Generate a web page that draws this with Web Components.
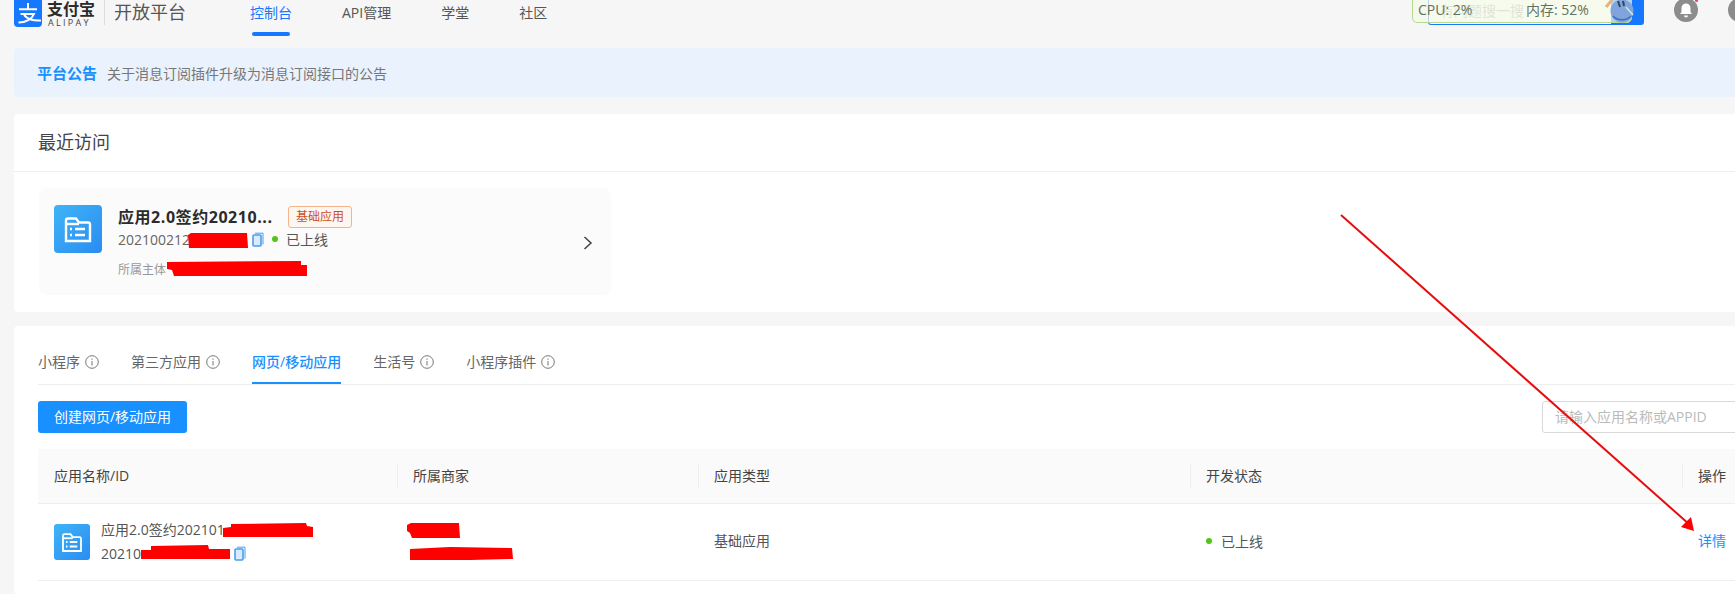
<!DOCTYPE html>
<html lang="zh">
<head>
<meta charset="utf-8">
<title>开放平台</title>
<style>
    html,body{
        margin:0;
        height:594px;
        overflow:hidden;
        background:#f6f6f6;
        color:#333;
        font-family:"Open Sans","Noto Sans CJK SC",sans-serif;
        font-size:14px;
    }
    #page{
        position:relative;
        width:1735px;
        height:594px;
        overflow:hidden;
    }
</style>
</head>
<body>
<div id="page">
    <ap-header></ap-header>
    <ap-notice label="平台公告">关于消息订阅插件升级为消息订阅接口的公告</ap-notice>
    <ap-recent></ap-recent>
    <ap-apps></ap-apps>
    <ap-monitor></ap-monitor>
    <ap-markup></ap-markup>
</div>

<script>
class PlainElement extends HTMLElement {
    constructor(){
        super();
        this.attachShadow({mode:'open'});
        this.shadowRoot.innerHTML=this.markup();
    }
    markup(){
        return '';
    }
}

class ApHeader extends PlainElement {
    markup(){
        return `
<style>
    :host{
        display:flex;
        height:48px;
        padding-left:14px;
        align-items:flex-start;
        white-space:nowrap;
    }
    .logo{
        flex:none;
        display:block;
        width:28px;
        height:27px;
    }
    .brand{
        width:50px;
        margin-left:5px;
        padding-top:1px;
        flex:none;
    }
    .brand b{
        display:block;
        font-size:16px;
        line-height:16px;
        color:#2b2b2b;
    }
    .brand span{
        display:block;
        margin-top:1px;
        padding-left:1px;
        font-size:9px;
        line-height:10px;
        letter-spacing:2.300px;
        color:#444;
    }
    .split{
        flex:none;
        width:1px;
        height:25px;
        margin:0 9px 0 7px;
        background:#ddd;
    }
    .title{
        flex:none;
        width:136px;
        font-size:18px;
        line-height:25px;
        color:#555;
    }
    nav{
        display:flex;
        gap:50px;
        color:#555;
    }
    .end{
        display:flex;
        margin-left:auto;
        align-items:flex-start;
    }
    .search{
        display:flex;
        flex:none;
        width:216px;
        height:25px;
        box-sizing:border-box;
        border:1px solid #1677ff;
        border-top:none;
        border-radius:0 0 3px 3px;
        background:#fff;
    }
    .search span{
        flex:1;
        padding-left:11px;
        line-height:22px;
        color:#a8a8a8;
        font-size:14px;
    }
    .search i{
        flex:none;
        width:32px;
        background:#1677ff;
    }
    .bell{
        flex:none;
        width:24px;
        height:24px;
        margin-left:30px;
        margin-top:-2px;
    }
    .avatar{
        flex:none;
        width:24px;
        height:24px;
        margin-left:30px;
        margin-right:-17px;
        margin-top:-2px;
        border-radius:50%;
        background:#8c8c8c;
    }
</style>
<svg class="logo" viewBox="0 0 28 27">
    <path d="M0 0H28V23a4 4 0 0 1-4 4H4a4 4 0 0 1-4-4Z" fill="#1677ff"/>
    <g fill="none" stroke="#fff" stroke-width="2">
        <path d="M5 9.200H23M14 3V9.200"/>
        <path d="M6.500 14H20C18 19 12 22.500 4.500 22.500"/>
        <path d="M10 15C13 18.500 18 21 27 20.500"/>
    </g>
</svg>
<div class="brand"><b>支付宝</b><span>ALIPAY</span></div>
<div class="split"></div>
<div class="title">开放平台</div>
<nav>
    <ap-nav-item active>控制台</ap-nav-item>
    <ap-nav-item>API管理</ap-nav-item>
    <ap-nav-item>学堂</ap-nav-item>
    <ap-nav-item>社区</ap-nav-item>
</nav>
<div class="end">
    <div class="search"><span>有问题搜一搜</span><i></i></div>
    <svg class="bell" viewBox="0 0 24 24">
        <circle cx="12" cy="12" r="12" fill="#8c8c8c"/>
        <path d="M12 5.500a4.500 4.500 0 0 0-4.500 4.500v4L6 16h12l-1.500-2v-4A4.500 4.500 0 0 0 12 5.500Z" fill="#fff"/>
        <path d="M10 17.500h4a2 2 0 0 1-4 0Z" fill="#fff"/>
        <circle cx="22.500" cy="2.500" r="1.500" fill="#e8446b"/>
    </svg>
    <div class="avatar"></div>
</div>`;
    }
}

class ApNavItem extends PlainElement {
    markup(){
        return `
<style>
    :host{
        display:block;
        height:36px;
        position:relative;
        line-height:26px;
    }
    :host([active]){
        color:#1677ff;
    }
    :host([active])::after{
        content:'';
        position:absolute;
        left:2px;
        right:2px;
        bottom:0;
        height:4px;
        border-radius:2px;
        background:#1677ff;
    }
</style>
<slot></slot>`;
    }
}

class ApNotice extends PlainElement {
    markup(){
        return `
<style>
    :host{
        display:flex;
        align-items:center;
        height:49px;
        margin-left:14px;
        padding-left:23px;
        border-radius:4px 0 0 4px;
        background:#e9f2fd;
        color:#777;
    }
    b{
        margin-right:10px;
        font-size:15px;
        color:#1890ff;
    }
</style>
<b>${this.getAttribute('label')}</b><slot></slot>`;
    }
}

class ApAppIcon extends PlainElement {
    markup(){
        return `
<style>
    :host{
        display:block;
        flex:none;
        width:var(--size,48px);
        height:var(--size,48px);
    }
    svg{
        display:block;
        width:100%;
        height:100%;
    }
</style>
<svg viewBox="0 0 48 48">
    <defs>
        <linearGradient id="g" x1="0" y1="0" x2="1" y2="1">
            <stop offset="0" stop-color="#3fb4f6"/>
            <stop offset="1" stop-color="#2a8cf2"/>
        </linearGradient>
    </defs>
    <rect width="48" height="48" rx="4" fill="url(#g)"/>
    <g fill="none" stroke="#fff" stroke-width="2.400">
        <path d="M12 15.500a2 2 0 0 1 2-2h8l3 4h9a2 2 0 0 1 2 2V36H12Z"/>
        <path d="M12 19H25"/>
        <path d="M21 24H31M21 30H31"/>
        <path d="M16 24H18M16 30H18"/>
    </g>
</svg>`;
    }
}

class ApCopyIcon extends PlainElement {
    markup(){
        return `
<style>
    :host{
        display:inline-block;
        flex:none;
        width:12px;
        height:15px;
    }
    svg{
        display:block;
    }
</style>
<svg width="12" height="15" viewBox="0 0 12 15" fill="none" stroke="#4a9df0">
    <path d="M3 1.200H11V12.500"/>
    <rect x="1" y="3" width="8" height="11" rx="1" stroke-width="1.600" fill="#d9ebfd"/>
</svg>`;
    }
}

class ApStatus extends PlainElement {
    markup(){
        return `
<style>
    :host{
        display:inline-flex;
        align-items:center;
        gap:9px;
        color:#555;
    }
    :host::before{
        content:'';
        width:6px;
        height:6px;
        border-radius:50%;
        background:#52c41a;
    }
</style>
<slot></slot>`;
    }
}

class ApInfoIcon extends PlainElement {
    markup(){
        return `
<style>
    :host{
        display:block;
        flex:none;
        width:14px;
        height:14px;
    }
    svg{
        display:block;
    }
</style>
<svg width="14" height="14" viewBox="0 0 14 14" fill="none" stroke="#777">
    <circle cx="7" cy="7" r="6.300"/>
    <path d="M7 6V10.500M7 3.500V4.800"/>
</svg>`;
    }
}

class ApRecent extends PlainElement {
    markup(){
        return `
<style>
    :host{
        display:block;
        height:198px;
        margin:17px 0 0 14px;
        border-radius:4px 0 0 4px;
        background:#fff;
    }
    h2{
        margin:0;
        height:58px;
        box-sizing:border-box;
        padding-left:24px;
        border-bottom:1px solid #eee;
        font-size:18px;
        font-weight:400;
        line-height:56px;
        color:#444;
    }
    .card{
        display:flex;
        width:572px;
        height:107px;
        box-sizing:border-box;
        margin:16px 0 0 25px;
        padding:17px 18px 0 15px;
        border-radius:8px;
        background:#fbfbfb;
    }
    .text{
        flex:1;
        margin-left:16px;
        margin-top:-1px;
    }
    .top{
        display:flex;
        align-items:center;
        height:24px;
    }
    .top b{
        width:170px;
        font-size:16px;
        letter-spacing:.55px;
        white-space:nowrap;
        color:#2b2b2b;
    }
    .badge{
        width:64px;
        height:22px;
        box-sizing:border-box;
        border:1px solid #f3b48c;
        border-radius:3px;
        background:#fff6f0;
        color:#c8501e;
        font-size:12px;
        line-height:20px;
        text-align:center;
        margin-top:2px;
    }
    .id{
        display:flex;
        align-items:center;
        height:24px;
        margin-top:-1px;
        color:#666;
    }
    .id span{
        width:134px;
    }
    ap-status{
        margin-left:8px;
        gap:8px;
    }
    .owner{
        margin-top:9px;
        font-size:12px;
        line-height:20px;
        color:#999;
    }
    svg{
        flex:none;
        margin-top:31px;
    }
</style>
<h2>最近访问</h2>
<div class="card">
    <ap-app-icon></ap-app-icon>
    <div class="text">
        <div class="top"><b>应用2.0签约20210...</b><div class="badge">基础应用</div></div>
        <div class="id"><span>202100212</span><ap-copy-icon></ap-copy-icon><ap-status>已上线</ap-status></div>
        <div class="owner">所属主体</div>
    </div>
    <svg width="10" height="14" viewBox="0 0 10 14" fill="none" stroke="#444" stroke-width="1.500"><path d="M1.500 1 8 7 1.500 13"/></svg>
</div>`;
    }
}

class ApTab extends PlainElement {
    markup(){
        return `
<style>
    :host{
        display:flex;
        align-items:flex-start;
        gap:5px;
        height:33px;
        box-sizing:border-box;
        line-height:22px;
        color:#666;
    }
    :host([active]){
        border-bottom:2px solid #1890ff;
        color:#1890ff;
        font-weight:500;
    }
    ap-info-icon{
        margin-top:4px;
    }
</style>
<slot></slot>${this.hasAttribute('active')?'':'<ap-info-icon></ap-info-icon>'}`;
    }
}

class ApApps extends PlainElement {
    markup(){
        return `
<style>
    :host{
        display:block;
        height:268px;
        margin:14px 0 0 14px;
        box-sizing:border-box;
        padding:25px 0 0 24px;
        border-radius:4px 0 0 4px;
        background:#fff;
    }
    .tabs{
        display:flex;
        gap:32px;
        border-bottom:1px solid #eee;
    }
    .tools{
        display:flex;
        justify-content:space-between;
        margin-top:16px;
    }
    .create{
        width:149px;
        height:32px;
        border-radius:3px;
        background:#1890ff;
        color:#fff;
        line-height:32px;
        text-align:center;
    }
    .input{
        width:220px;
        height:32px;
        box-sizing:border-box;
        padding-left:12px;
        margin-right:-27px;
        border:1px solid #d9d9d9;
        border-radius:3px;
        color:#bbb;
        line-height:30px;
    }
</style>
<div class="tabs">
    <ap-tab>小程序</ap-tab>
    <ap-tab>第三方应用</ap-tab>
    <ap-tab active>网页/移动应用</ap-tab>
    <ap-tab>生活号</ap-tab>
    <ap-tab>小程序插件</ap-tab>
</div>
<div class="tools">
    <div class="create">创建网页/移动应用</div>
    <div class="input">请输入应用名称或APPID</div>
</div>
<ap-table></ap-table>`;
    }
}

class ApTable extends PlainElement {
    markup(){
        return `
<style>
    :host{
        display:block;
        margin-top:16px;
    }
    .row{
        display:grid;
        grid-template-columns:359px 301px 492px 492px 1fr;
        align-items:center;
        border-bottom:1px solid #eee;
    }
    .head{
        height:54px;
        background:#fafafa;
        color:#444;
    }
    .head div{
        position:relative;
        padding:0 0 3px 16px;
    }
    .head div+div::before{
        content:'';
        position:absolute;
        left:0;
        top:50%;
        height:24px;
        margin-top:-12px;
        border-left:1px solid #eee;
    }
    .body{
        height:76px;
        color:#555;
    }
    .body>div{
        padding:0 0 4px 16px;
    }
    .body>.name{
        display:flex;
        align-items:center;
        gap:11px;
        padding-bottom:0;
        --size:36px;
    }
    .name div div{
        height:22px;
        line-height:20px;
    }
    .id{
        display:flex;
        align-items:center;
    }
    .id span{
        width:133px;
        flex:none;
        margin-top:1px;
    }
    .link{
        color:#1890ff;
    }
</style>
<div class="row head">
    <div>应用名称/ID</div><div>所属商家</div><div>应用类型</div><div>开发状态</div><div>操作</div>
</div>
<div class="row body">
    <div class="name">
        <ap-app-icon></ap-app-icon>
        <div>
            <div>应用2.0签约202101</div>
            <div class="id"><span>20210</span><ap-copy-icon></ap-copy-icon></div>
        </div>
    </div>
    <div></div>
    <div>基础应用</div>
    <div><ap-status>已上线</ap-status></div>
    <div class="link">详情</div>
</div>`;
    }
}

// floating system monitor that sits over the header search box
class ApMonitor extends PlainElement {
    markup(){
        return `
<style>
    :host{
        position:absolute;
        left:1412px;
        top:-6px;
        width:220px;
        height:29px;
        box-sizing:border-box;
        border:1px solid #b5da8f;
        border-radius:0 0 5px 5px;
        background:rgba(244,250,232,.72);
        color:#62725c;
        font-size:14px;
        line-height:30px;
        white-space:nowrap;
    }
    .cpu{
        position:absolute;
        left:5px;
    }
    .mem{
        position:absolute;
        left:113px;
    }
    svg{
        position:absolute;
        right:-3px;
        top:0;
    }
</style>
<span class="cpu">CPU: 2%</span>
<span class="mem">内存: 52%</span>
<svg width="36" height="29" viewBox="0 0 36 29">
    <circle cx="24" cy="16" r="11.500" fill="#7fa5dc"/>
    <path d="M15 21C19 26 29 26 33 21" fill="none" stroke="#3d6fc4" stroke-width="1.500"/>
    <path d="M28 12 35 20" stroke="#c8ecdc" stroke-width="1.500"/>
    <path d="M8 12 14 5" stroke="#e9b27c" stroke-width="3"/>
    <path d="M20 6 22 12M25 6 26 11" stroke="#33445e" stroke-width="2"/>
</svg>`;
    }
}

// red pen marks that were drawn on top of the screenshot
class ApMarkup extends PlainElement {
    markup(){
        return `
<style>
    :host{
        position:absolute;
        left:0;
        top:0;
        width:1735px;
        height:594px;
        pointer-events:none;
    }
    svg{
        display:block;
    }
</style>
<svg width="1735" height="594" viewBox="0 0 1735 594" fill="#f00">
    <path d="M188 235 191 233 247 233 248 248 189 248Z"/>
    <path d="M167 262 301 261 301 265 307 265 307 276 174 276 172 270 167 269Z"/>
    <path d="M223 528 231 527 231 524 306 523 307 526 313 527 313 537 223 537Z"/>
    <path d="M141 550 151 550 151 546 208 545 209 549 230 549 230 559 141 559Z"/>
    <path d="M407 525 411 523 459 523 460 538 412 538 410 533 407 531Z"/>
    <path d="M410 549 450 547 512 548 513 559 470 560 410 560Z"/>
    <path d="M1341 215 1690 525" stroke="#e60d0d" stroke-width="2" fill="none"/>
    <path d="M1694 531 1681 527 1691 517Z"/>
</svg>`;
    }
}

customElements.define('ap-header',ApHeader);
customElements.define('ap-nav-item',ApNavItem);
customElements.define('ap-notice',ApNotice);
customElements.define('ap-app-icon',ApAppIcon);
customElements.define('ap-copy-icon',ApCopyIcon);
customElements.define('ap-status',ApStatus);
customElements.define('ap-info-icon',ApInfoIcon);
customElements.define('ap-recent',ApRecent);
customElements.define('ap-tab',ApTab);
customElements.define('ap-apps',ApApps);
customElements.define('ap-table',ApTable);
customElements.define('ap-monitor',ApMonitor);
customElements.define('ap-markup',ApMarkup);
</script>
</body>
</html>
